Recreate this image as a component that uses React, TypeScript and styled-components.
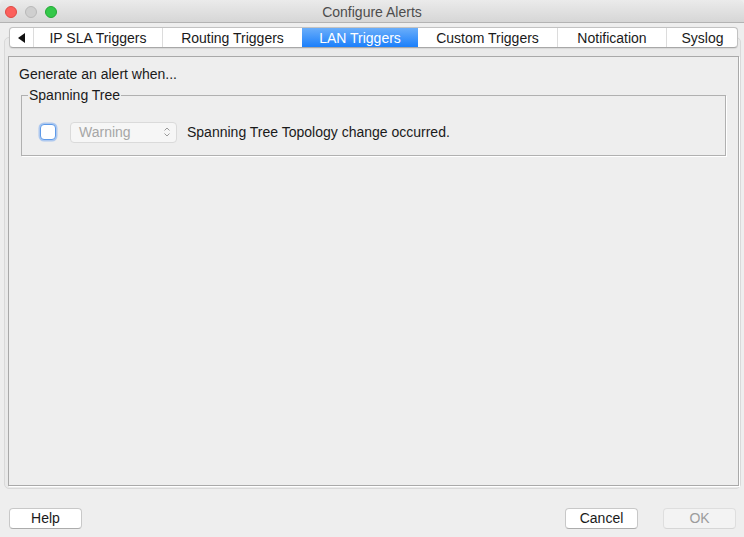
import React from "react";
import styled, { createGlobalStyle } from "styled-components";

const Global = createGlobalStyle`
  html, body { margin: 0; padding: 0; background: #eeeeee; }
  body { font-family: "Liberation Sans", Arial, sans-serif; font-size: 14px; color: #1a1a1a; }
  * { box-sizing: border-box; }
`;

const Window = styled.div`
  width: 744px;
  height: 537px;
  display: flex;
  flex-direction: column;
  background: #eeeeee;
  overflow: hidden;
  position: relative;
`;

const DesktopStrip = styled.div`
  position: absolute;
  top: 0;
  left: 0;
  right: 0;
  height: 1px;
  display: flex;
`;

const StripPart = styled.div<{ $w: number; $c: string }>`
  width: ${(p) => p.$w}px;
  background: ${(p) => p.$c};
`;

const TitleBar = styled.div`
  height: 23px;
  flex: none;
  display: flex;
  align-items: center;
  position: relative;
  background: linear-gradient(#ebebeb, #d6d6d6);
  border-bottom: 1px solid #b3b3b3;
  border-radius: 5px 5px 0 0;
`;

const Lights = styled.div`
  display: flex;
  gap: 8px;
  padding: 2px 0 0 5px;
`;

const Light = styled.div<{ $c: string; $b: string }>`
  width: 12px;
  height: 12px;
  border-radius: 50%;
  background: ${(p) => p.$c};
  border: 1px solid ${(p) => p.$b};
`;

const Title = styled.div`
  position: absolute;
  left: 0;
  right: 0;
  top: 4px;
  text-align: center;
  color: #4d4d4d;
  font-size: 14px;
  pointer-events: none;
`;

const Main = styled.div`
  flex: 1;
  display: flex;
  flex-direction: column;
  padding: 14px 3px 0 4px;
`;

const Frame = styled.div`
  flex: none;
  height: 452px;
  border: 1px solid #d9d9d9;
  border-radius: 5px;
  background: #eaeaea;
  display: flex;
  flex-direction: column;
`;

const TabStrip = styled.div`
  margin: -11px 2px 0 4px;
  height: 21px;
  display: flex;
  background: #ffffff;
  border: 1px solid #c2c2c2;
  border-bottom-color: #a8a8a8;
  border-radius: 4px;
  overflow: hidden;
  box-shadow: 0 0.5px 1px rgba(0, 0, 0, 0.08);
`;

const Tab = styled.div<{ $w: number; $sel?: boolean; $first?: boolean }>`
  width: ${(p) => p.$w}px;
  flex: none;
  display: flex;
  align-items: center;
  justify-content: center;
  font-size: 14px;
  color: ${(p) => (p.$sel ? "#ffffff" : "#1a1a1a")};
  background: ${(p) => (p.$sel ? "linear-gradient(#6aaefa, #1b7ffb)" : "transparent")};
  border-left: ${(p) => (p.$first || p.$sel ? "none" : "1px solid #dcdcdc")};
  white-space: nowrap;
`;

const Panel = styled.div`
  margin: 8px 1px 0 3px;
  height: 430px;
  border: 1px solid #a9a9a9;
  box-shadow: 1px 1px 0 #ffffff;
  background: #eeeeee;
  padding: 9px 12px 0 10px;
  display: flex;
  flex-direction: column;
`;

const Intro = styled.div`
  font-size: 14px;
  line-height: 17px;
  color: #1a1a1a;
`;

const Group = styled.fieldset`
  margin: 4px 0 0 2px;
  padding: 0 0 0 6px;
  border: 1px solid #b0b0b0;
  box-shadow: 1px 1px 0 #ffffff;
  min-width: 0;
`;

const Legend = styled.legend`
  font-size: 14px;
  line-height: 17px;
  padding: 0 1px;
  margin-left: 0;
  color: #1a1a1a;
`;

const Row = styled.div`
  display: flex;
  align-items: center;
  height: 51px;
  padding: 5px 0 0 12px;
`;

const Check = styled.div`
  width: 16px;
  height: 16px;
  border-radius: 4px;
  background: #ffffff;
  border: 1px solid #5e9ae8;
  box-shadow: 0 0 0 1.5px rgba(120, 170, 240, 0.55);
  flex: none;
`;

const Combo = styled.div`
  margin-left: 14px;
  width: 107px;
  height: 21px;
  border-radius: 4px;
  border: 1px solid #dadada;
  background: #f6f6f6;
  display: flex;
  align-items: center;
  justify-content: space-between;
  padding: 0 5px 0 8px;
  color: #a6a6a6;
  font-size: 14px;
  flex: none;
`;

const Label = styled.div`
  margin-left: 10px;
  font-size: 14px;
  color: #1a1a1a;
`;

const Footer = styled.div`
  flex: 1;
  display: flex;
  align-items: center;
  justify-content: space-between;
  padding: 10px 5px 0 5px;
`;

const RightButtons = styled.div`
  display: flex;
  gap: 25px;
`;

const Button = styled.div<{ $disabled?: boolean }>`
  width: 73px;
  height: 21px;
  border-radius: 4px;
  background: ${(p) => (p.$disabled ? "#f3f3f3" : "#ffffff")};
  border: 1px solid ${(p) => (p.$disabled ? "#dedede" : "#c8c8c8")};
  border-bottom-color: ${(p) => (p.$disabled ? "#d6d6d6" : "#acacac")};
  display: flex;
  align-items: center;
  justify-content: center;
  font-size: 14px;
  color: ${(p) => (p.$disabled ? "#9c9c9c" : "#1a1a1a")};
`;

const Chevrons = () => (
  <svg width="8" height="12" viewBox="0 0 8 12">
    <path d="M1.5 4.5 L4 2 L6.5 4.5 M1.5 7.5 L4 10 L6.5 7.5" fill="none" stroke="#9a9a9a" strokeWidth="1" />
  </svg>
);

const LeftArrow = () => (
  <svg width="8" height="10" viewBox="0 0 8 10">
    <path d="M7 0 L7 10 L0 5 Z" fill="#111" />
  </svg>
);

export default function App() {
  return (
    <>
      <Global />
      <Window>
        <DesktopStrip>
          <StripPart $w={100} $c="transparent" />
          <StripPart $w={10} $c="#e8d9a0" />
          <StripPart $w={320} $c="transparent" />
          <StripPart $w={140} $c="#3a3a3a" />
        </DesktopStrip>
        <TitleBar>
          <Lights>
            <Light $c="#fc605c" $b="#de4a44" />
            <Light $c="#cfcfcf" $b="#b9b9b9" />
            <Light $c="#34c84a" $b="#22a834" />
          </Lights>
          <Title>Configure Alerts</Title>
        </TitleBar>
        <Main>
          <Frame>
            <TabStrip>
              <Tab $w={23} $first>
                <LeftArrow />
              </Tab>
              <Tab $w={129}>IP SLA Triggers</Tab>
              <Tab $w={140}>Routing Triggers</Tab>
              <Tab $w={116} $sel>LAN Triggers</Tab>
              <Tab $w={139} $first>Custom Triggers</Tab>
              <Tab $w={109}>Notification</Tab>
              <Tab $w={72}>Syslog</Tab>
            </TabStrip>
            <Panel>
              <Intro>Generate an alert when...</Intro>
              <Group>
                <Legend>Spanning Tree</Legend>
                <Row>
                  <Check />
                  <Combo>
                    <span>Warning</span>
                    <Chevrons />
                  </Combo>
                  <Label>Spanning Tree Topology change occurred.</Label>
                </Row>
              </Group>
            </Panel>
          </Frame>
          <Footer>
            <Button>Help</Button>
            <RightButtons>
              <Button>Cancel</Button>
              <Button $disabled>OK</Button>
            </RightButtons>
          </Footer>
        </Main>
      </Window>
    </>
  );
}
